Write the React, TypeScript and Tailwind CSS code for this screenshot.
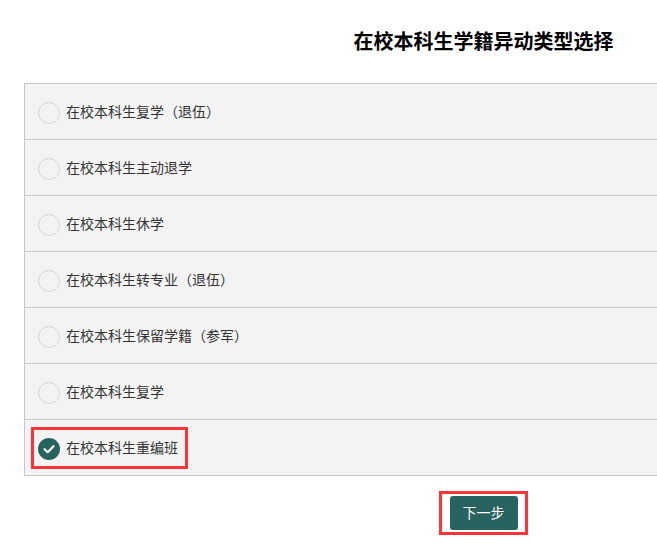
import React from "react"

const options = [
  "在校本科生复学（退伍）",
  "在校本科生主动退学",
  "在校本科生休学",
  "在校本科生转专业（退伍）",
  "在校本科生保留学籍（参军）",
  "在校本科生复学",
  "在校本科生重编班",
]
const selected = 6
const font = "font-['Liberation_Sans','Noto_Sans_CJK_SC',sans-serif]"

export default function App() {
  return (
    <div className={`relative w-[657px] h-[551px] overflow-hidden bg-white ${font}`}>
      <div className="w-[919px] ml-[24px]">
        {/* Title */}
        <h1 className="pt-[28px] h-[83px] text-center text-[20px] leading-[28px] font-bold text-black">
          在校本科生学籍异动类型选择
        </h1>

        {/* Options */}
        <div className="border-l border-t border-[#c8c8c8] bg-[#f3f3f3]">
          {options.map((label, i) => (
            <div key={label} className="flex items-center h-[56px] pl-[13px] pt-[2px] border-b border-[#c8c8c8]">
              {i === selected ? (
                <span className="flex items-center justify-center w-[22px] h-[22px] rounded-full bg-[#28635f]">
                  <svg width="14" height="14" viewBox="0 0 14 14" fill="none">
                    <path d="M2.5 7.2 L5.7 10.2 L11.5 4.2" stroke="white" strokeWidth="2.2" strokeLinecap="round" strokeLinejoin="round" />
                  </svg>
                </span>
              ) : (
                <span className="w-[22px] h-[22px] rounded-full border border-[#d4d4ce]" />
              )}
              <span className="ml-[6px] text-[14px] text-[#333333]">{label}</span>
            </div>
          ))}
        </div>

        {/* Next button */}
        <div className="flex justify-center pt-[20px]">
          <button className="w-[68px] h-[34px] rounded-[3px] bg-[#28635f] text-white text-[14px]">下一步</button>
        </div>
      </div>

      {/* Red annotation boxes */}
      <div className="absolute left-[31px] top-[427px] w-[157px] h-[42px] border-[3px] border-[#fb3438]" />
      <div className="absolute left-[439px] top-[491px] w-[89px] h-[44px] border-[3px] border-[#fb3438]" />
    </div>
  )
}
